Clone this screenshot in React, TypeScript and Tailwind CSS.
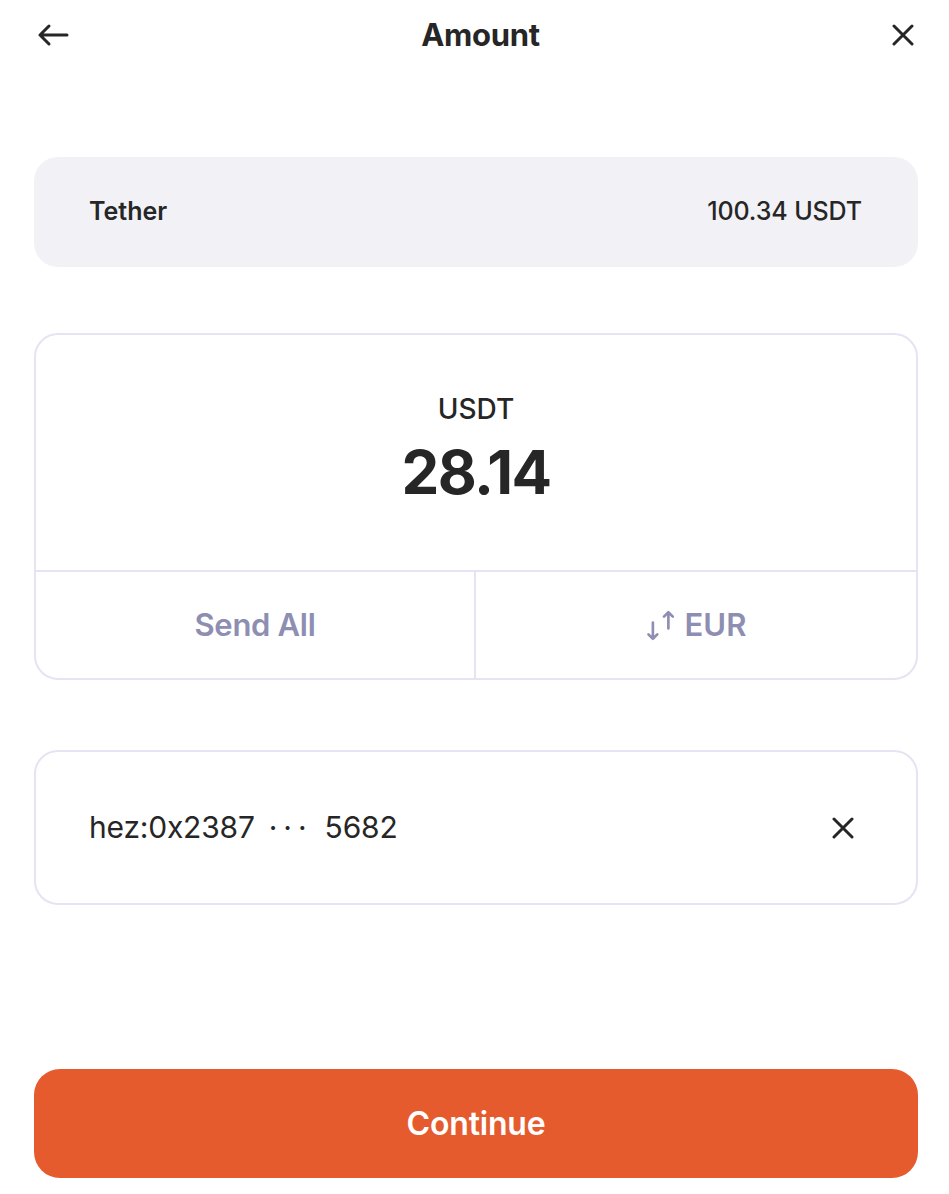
function SwapIcon() {
  return (
    <svg width="30" height="31" viewBox="2 1.5 20 21" fill="none" stroke="currentColor" strokeWidth="1.8" strokeLinecap="round" strokeLinejoin="round">
      <path d="M6.5 10v11M3.5 18l3 3 3-3" />
      <path d="M17 14V3M14 6l3-3 3 3" />
    </svg>
  )
}

function CloseIcon({ className = '' }: { className?: string }) {
  return (
    <svg className={className} width="22" height="22" viewBox="0 0 22 22" fill="none" stroke="currentColor" strokeWidth="3" strokeLinecap="round">
      <path d="M2 2l18 18M20 2L2 20" />
    </svg>
  )
}

export default function App() {
  return (
    <div
      className="w-[949px] h-[1194px] bg-white flex flex-col pl-[34px] pr-[31px] text-[#262626]"
      style={{ fontFamily: 'Inter, "Noto Sans", sans-serif' }}
    >
      {/* Header */}
      <header className="h-[70px] flex items-center justify-between">
        <svg className="ml-[3px]" width="32" height="24" viewBox="0 0 32 24" fill="none" stroke="currentColor" strokeWidth="3" strokeLinecap="round" strokeLinejoin="round">
          <path d="M30 12H3M12 3l-9 9 9 9" />
        </svg>
        <h1 className="text-[31px] font-bold tracking-[-0.3px]">Amount</h1>
        <CloseIcon className="mr-[4px]" />
      </header>

      {/* Token */}
      <div className="mt-[87px] h-[110px] rounded-[24px] bg-[#f2f2f6] flex items-center justify-between pl-[55px] pr-[56px]">
        <span className="text-[25px] font-semibold">Tether</span>
        <span className="text-[25px] font-medium tracking-[-0.1px]">100.34 USDT</span>
      </div>

      {/* Amount */}
      <div className="mt-[66px] h-[347px] rounded-[24px] border-2 border-[#e4e4f4] flex flex-col overflow-hidden">
        <div className="h-[235px] flex flex-col items-center pt-[56px]">
          <span className="text-[28px] font-medium leading-[36px]">USDT</span>
          <span className="text-[60px] font-bold leading-[70px] tracking-[-1.5px] mt-[10px]">28.14</span>
        </div>
        <div className="flex-1 grid grid-cols-2 border-t-2 border-[#e4e4f4] text-[#8e8eb2]">
          <button className="flex items-center justify-center border-r-2 border-[#e4e4f4] text-[31px] font-semibold tracking-[-0.3px]">
            Send All
          </button>
          <button className="flex items-center justify-center gap-[9px] text-[31px] font-semibold">
            <SwapIcon />
            EUR
          </button>
        </div>
      </div>

      {/* Recipient */}
      <div className="mt-[70px] h-[155px] rounded-[24px] border-2 border-[#e4e4f4] flex items-center justify-between pl-[53px] pr-[62px]">
        <span className="text-[30px] tracking-[-0.2px]">
          hez:0x2387<span className="ml-[14px] mr-[12px] tracking-[6px]">···</span>5682
        </span>
        <CloseIcon />
      </div>

      <button className="mt-auto mb-[16px] h-[109px] rounded-[26px] bg-[#e65b2e] text-white text-[32px] font-semibold tracking-[-0.2px]">
        Continue
      </button>
    </div>
  )
}
